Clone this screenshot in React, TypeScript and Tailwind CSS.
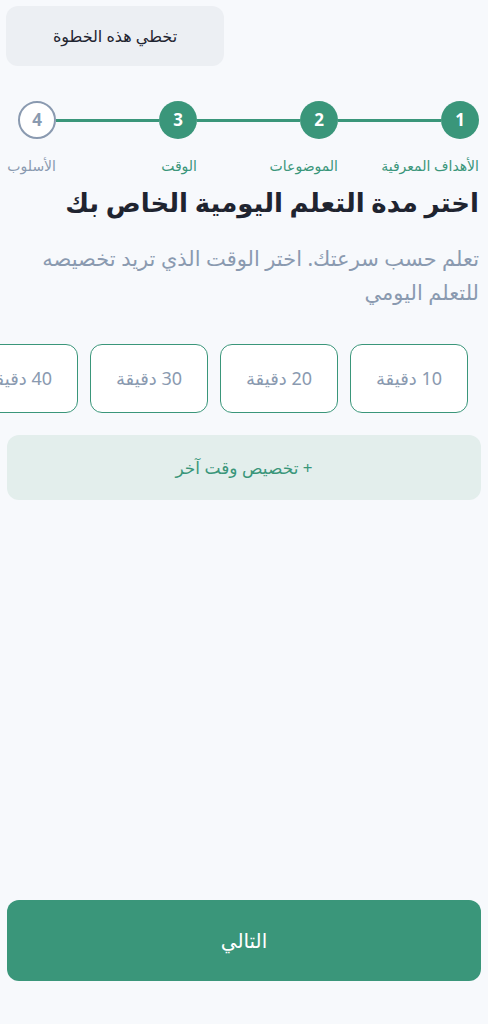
import React from "react";

const steps = [
  { n: 1, label: "الأهداف المعرفية", done: true },
  { n: 2, label: "الموضوعات", done: true },
  { n: 3, label: "الوقت", done: true },
  { n: 4, label: "الأسلوب", done: false },
];

const options = ["10 دقيقة", "20 دقيقة", "30 دقيقة", "40 دقيقة"];

const App = () => {
  return (
    <div
      dir="rtl"
      className="min-h-[1024px] w-full bg-[#f7f9fc] flex flex-col overflow-hidden"
      style={{ fontFamily: '"Noto Sans", "DejaVu Sans", sans-serif' }}
    >
      <div className="flex justify-end px-[6px] pt-[6px]">
        <button className="w-[218px] h-[60px] rounded-xl bg-[#eceff3] text-[#1f2430] text-[16px]">
          تخطي هذه الخطوة
        </button>
      </div>

      <div className="flex items-start pl-[18px] pr-[9px] mt-[35px]">
        {steps.map((s, i) => (
          <React.Fragment key={s.n}>
            <div className="flex flex-col items-start w-[38px]">
              <div
                className={
                  s.done
                    ? "w-[38px] h-[38px] rounded-full bg-[#3a967a] text-white flex items-center justify-center font-bold text-[17px]"
                    : "w-[38px] h-[38px] rounded-full bg-white border-2 border-[#8a9ab0] text-[#8a9ab0] flex items-center justify-center font-bold text-[17px]"
                }
              >
                {s.n}
              </div>
              <span
                className={
                  s.done
                    ? "mt-[16px] whitespace-nowrap text-[14px] text-[#3a967a]"
                    : "mt-[16px] whitespace-nowrap text-[14px] text-[#8a9ab0]"
                }
              >
                {s.label}
              </span>
            </div>
            {i < steps.length - 1 && (
              <div className="flex-1 h-[3px] mt-[18px] bg-[#3a967a]" />
            )}
          </React.Fragment>
        ))}
      </div>

      <div className="px-[9px] mt-[6px]">
        <h1 className="text-[26px] font-bold text-[#1f2430] leading-[40px]">
          اختر مدة التعلم اليومية الخاص بك
        </h1>
        <p className="mt-[19px] text-[21px] leading-[34px] text-[#8a9ab0]">
          تعلم حسب سرعتك. اختر الوقت الذي تريد تخصيصه للتعلم اليومي
        </p>
      </div>

      <div className="flex gap-[12px] pr-[20px] mt-[35px] overflow-hidden">
        {options.map((o) => (
          <div
            key={o}
            className="shrink-0 w-[118px] h-[69px] rounded-xl border-[1.5px] border-[#3a967a] bg-white flex items-center justify-center text-[18px] text-[#8a9ab0] whitespace-nowrap"
          >
            {o}
          </div>
        ))}
      </div>

      <div className="px-[7px] mt-[22px]">
        <button className="w-full h-[65px] rounded-xl bg-[#e3eeec] text-[#3a967a] text-[17px]">
          + تخصيص وقت آخر
        </button>
      </div>

      <div className="flex-1" />

      <div className="px-[7px] pb-[43px]">
        <button className="w-full h-[81px] rounded-xl bg-[#3a967a] text-white text-[20px]">
          التالي
        </button>
      </div>
    </div>
  );
};

export default App;
